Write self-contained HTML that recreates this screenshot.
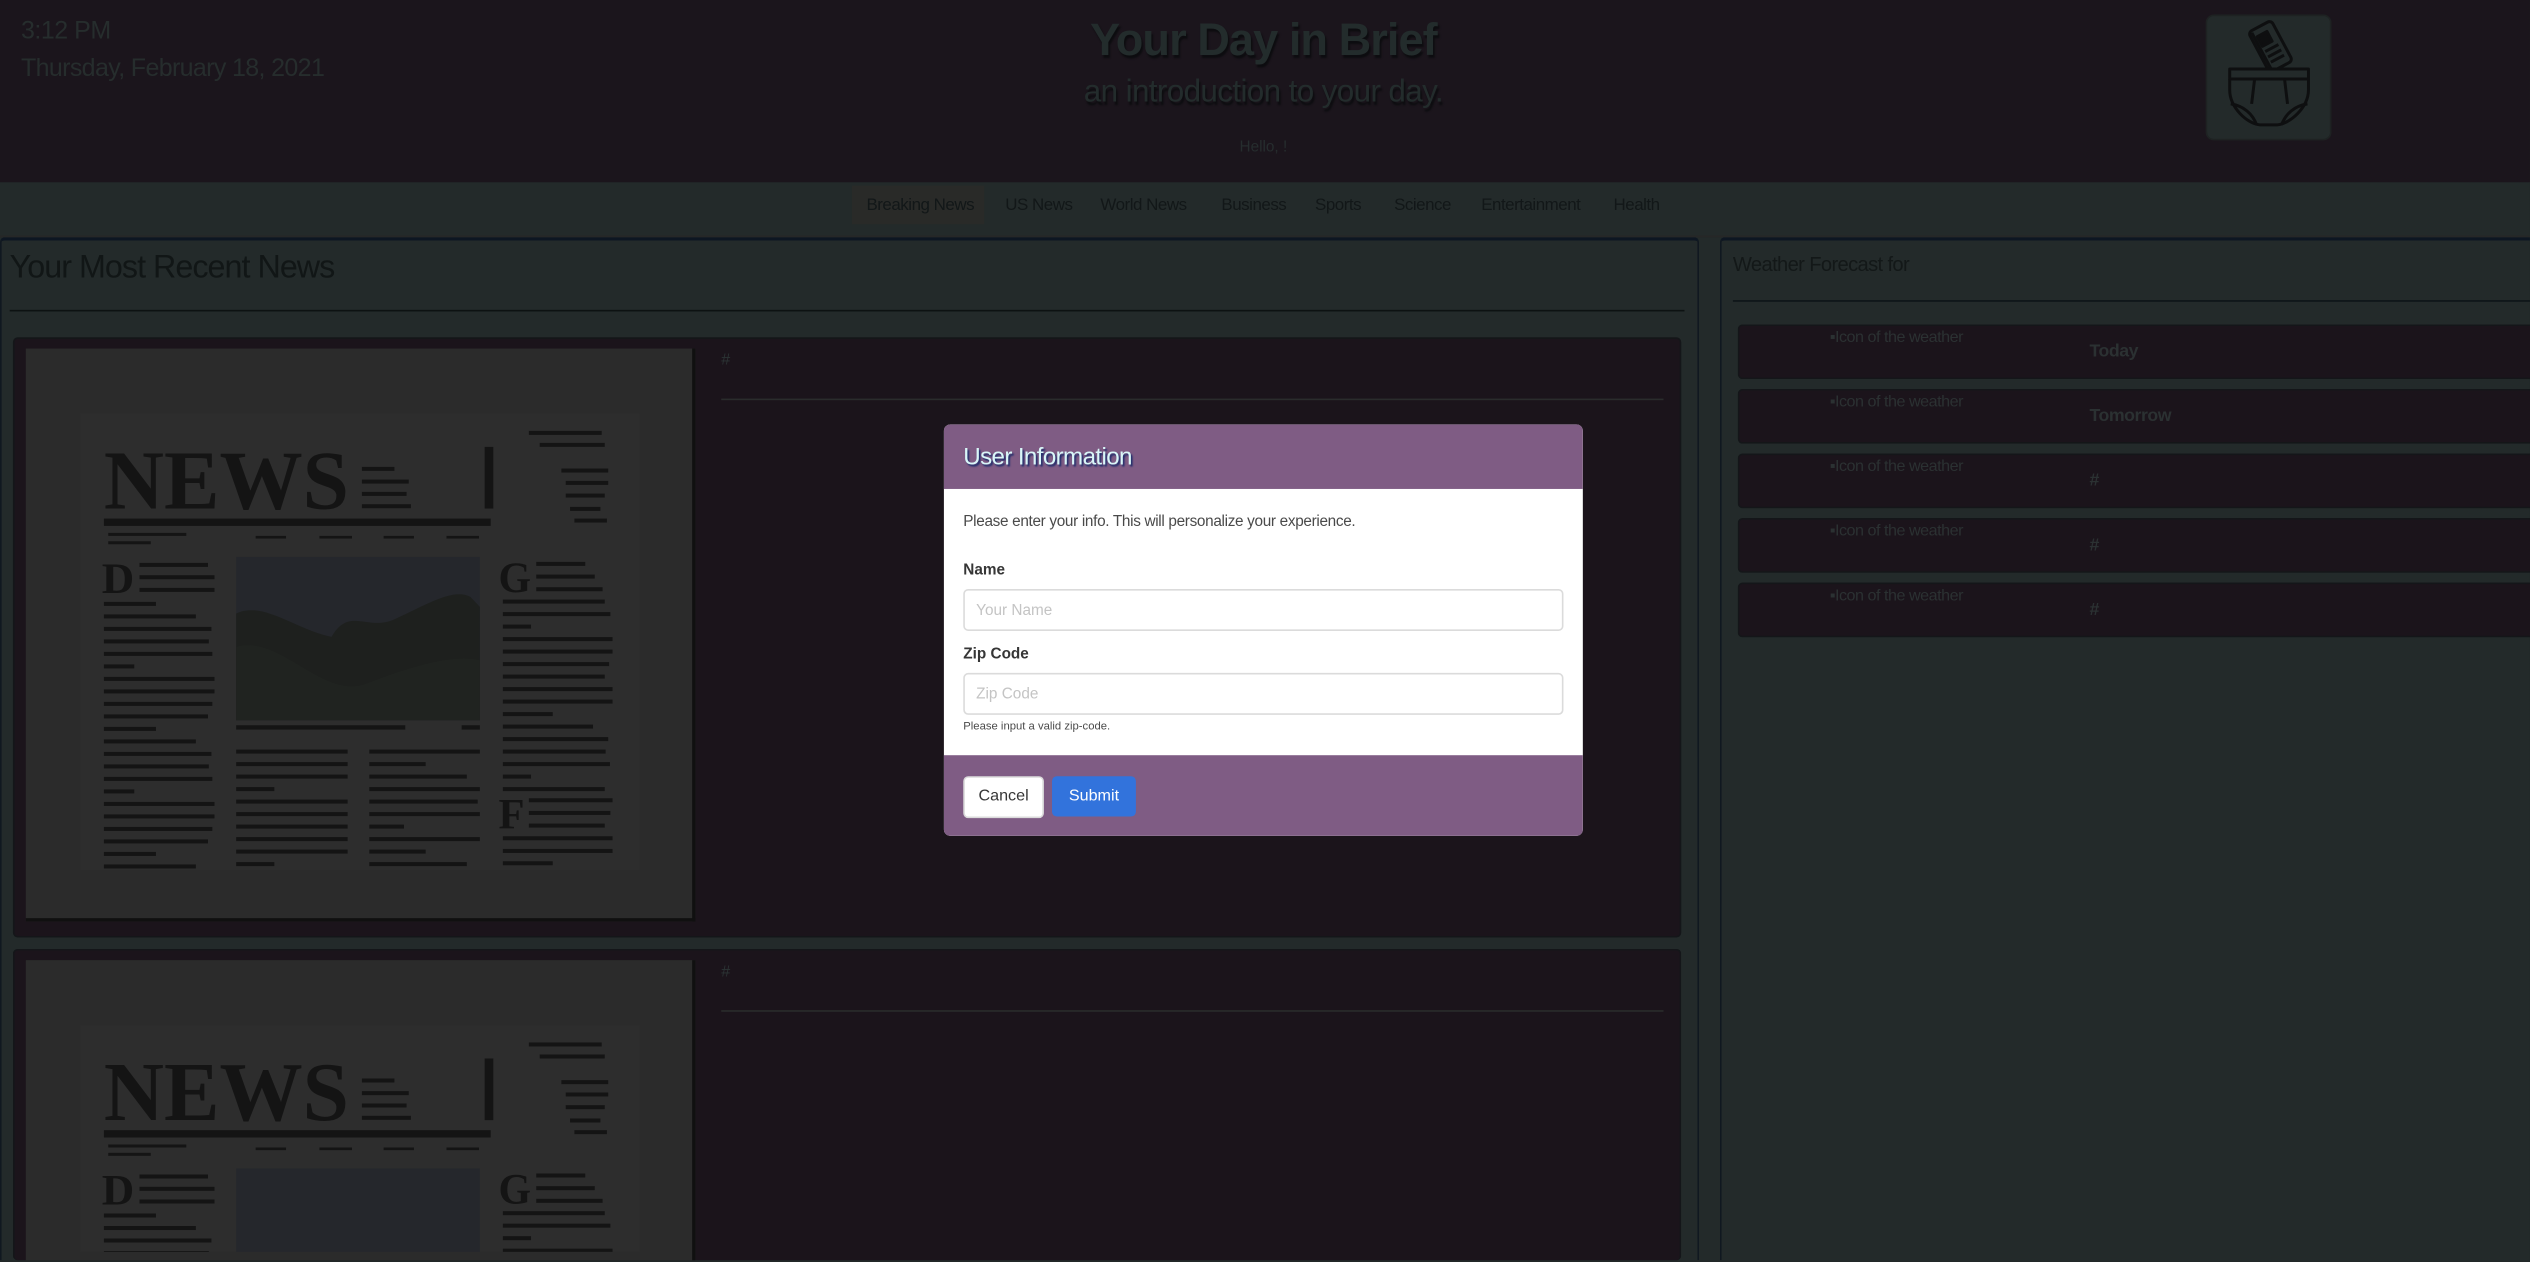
<!DOCTYPE html>
<html><head><meta charset="utf-8">
<style>
html,body{margin:0;padding:0;background:#1b151c;overflow:hidden;width:2530px;height:1262px}
#w{position:absolute;left:0;top:0;width:1568px;height:782px;transform:scale(1.6135,1.6137);transform-origin:0 0;font-family:"Liberation Sans",sans-serif;overflow:hidden;background:#232a2a}
.a{position:absolute;white-space:nowrap}
#hdr{position:absolute;left:0;top:0;width:1568px;height:113px;background:#1b151c}
#nav{position:absolute;left:0;top:113px;width:1568px;height:33px;background:#232a2a;border-bottom:1px solid #262727}
.ni{position:absolute;top:121px;font-size:10.5px;color:#121718;letter-spacing:-.3px}
.card{position:absolute;background:#1b141b;border:1px solid #141619;border-radius:3px}
.img{position:absolute;background:#2b2b2b;overflow:hidden;border-right:2px solid #101010;border-bottom:2px solid #101010}
.wr{position:absolute;left:1077px;width:491px;height:32px;background:#1b141b;border:1px solid #141619;border-right:none;border-radius:3px 0 0 3px}
.wi{position:absolute;left:56px;top:2px;font-size:10px;color:#2b3132;letter-spacing:-.3px}
.wl{position:absolute;left:217px;top:10px;font-size:11px;font-weight:bold;color:#2b3132;letter-spacing:-.3px}
</style></head><body><div id="w">
<div id="hdr"></div>
<div class="a" style="left:13px;top:11px;font-size:15.5px;color:#262d2d;letter-spacing:-.3px">3:12 PM</div>
<div class="a" style="left:13px;top:34px;font-size:15.5px;color:#262d2d;letter-spacing:-.4px">Thursday, February 18, 2021</div>
<div class="a" style="left:0;width:1566px;text-align:center;top:9px;font-size:28px;font-weight:bold;color:#232c2c;letter-spacing:-.6px;text-shadow:1px 2px 1px #0d0d10">Your Day in Brief</div>
<div class="a" style="left:0;width:1566px;text-align:center;top:46px;font-size:19.5px;color:#232c2c;letter-spacing:-.4px;text-shadow:1px 2px 1px #0d0d10">an introduction to your day.</div>
<div class="a" style="left:0;width:1566px;text-align:center;top:86px;font-size:9.5px;color:#262d2e">Hello, !</div>
<div class="a" style="left:1367px;top:9px;width:76px;height:76px;background:#232a2a;border-radius:5px;border:1px solid #1e2222">
<svg width="76" height="76" viewBox="0 0 122 123" fill="none" stroke="#0e0f10" stroke-width="3" stroke-linejoin="round">
<g transform="rotate(-28 62 31)"><rect x="50" y="8" width="26" height="46" rx="4"/><rect x="56" y="16" width="11" height="11" fill="#0e0f10"/><line x1="56" y1="33" x2="71" y2="33"/><line x1="56" y1="39" x2="71" y2="39"/><line x1="56" y1="45" x2="71" y2="45"/><line x1="53" y1="10" x2="53" y2="52"/></g>
<rect x="22" y="53" width="79" height="10" fill="#232a2a"/>
<path d="M22 63 L22 74 C22 92 40 108 52 109 L70 109 C82 108 101 92 101 74 L101 63"/>
<path d="M47 63 L44 88 M77 63 L80 88"/>
<path d="M23 88 C36 90 45 98 49 109 M100 88 C87 90 78 98 74 109"/>
</svg></div>
<div id="nav"></div>
<div class="a" style="left:528px;top:115px;width:82px;height:24px;background:#292a28"></div>
<div class="ni" style="left:537px">Breaking News</div>
<div class="ni" style="left:623px">US News</div>
<div class="ni" style="left:682px">World News</div>
<div class="ni" style="left:757px">Business</div>
<div class="ni" style="left:815px">Sports</div>
<div class="ni" style="left:864px">Science</div>
<div class="ni" style="left:918px">Entertainment</div>
<div class="ni" style="left:1000px">Health</div>

<div class="a" style="left:0;top:147px;width:1051px;height:632px;border:1px solid #101820;border-top:2px solid #0d1622;border-bottom:none;border-radius:3px 3px 0 0"></div>
<div class="a" style="left:6px;top:155px;font-size:20px;color:#111616;letter-spacing:-.6px">Your Most Recent News</div>
<div class="a" style="left:6px;top:192px;width:1038px;height:1px;background:#0d1212"></div>

<div class="card" style="left:8px;top:209px;width:1032px;height:370px"></div>
<div class="a" style="left:447px;top:218px;font-size:10px;color:#2b3334">#</div>
<div class="a" style="left:447px;top:247px;width:584px;height:1px;background:#2a2c2c"></div>
<div class="card" style="left:8px;top:588px;width:1032px;height:192px;border-bottom:none"></div>
<div class="a" style="left:447px;top:597px;font-size:10px;color:#2b3334">#</div>
<div class="a" style="left:447px;top:626px;width:584px;height:1px;background:#2a2c2c"></div>

<div class="img" id="i1" style="left:16px;top:216px;width:413px;height:353px"><svg id="np" style="position:absolute;left:-3.6px;top:32px" width="421.4" height="322.3" viewBox="0 0 1568 1560" preserveAspectRatio="none">
<rect x="140" y="40" width="1290" height="1370" fill="#2d2d2d"/>
<g fill="#141414">
<text x="195" y="325" font-family="Liberation Serif,serif" font-weight="bold" font-size="250" textLength="565" lengthAdjust="spacingAndGlyphs">NEWS</text>
<rect x="790" y="200" width="75" height="12"/><rect x="790" y="238" width="108" height="12"/><rect x="790" y="275" width="103" height="12"/><rect x="790" y="312" width="113" height="12"/>
<rect x="1073" y="140" width="20" height="185"/>
<rect x="195" y="355" width="892" height="22"/>
<rect x="205" y="398" width="180" height="9"/><rect x="205" y="423" width="98" height="9"/>
<rect x="545" y="407" width="70" height="8"/><rect x="692" y="407" width="75" height="8"/><rect x="840" y="407" width="70" height="8"/><rect x="985" y="407" width="75" height="8"/>
<rect x="1175" y="92" width="168" height="12"/><rect x="1200" y="128" width="150" height="12"/><rect x="1250" y="205" width="108" height="12"/><rect x="1260" y="242" width="98" height="12"/><rect x="1260" y="280" width="90" height="12"/><rect x="1270" y="320" width="70" height="12"/><rect x="1280" y="355" width="75" height="12"/>
<text x="190" y="578" font-family="Liberation Serif,serif" font-weight="bold" font-size="130" textLength="75" lengthAdjust="spacingAndGlyphs">D</text>
<text x="1105" y="575" font-family="Liberation Serif,serif" font-weight="bold" font-size="130" textLength="75" lengthAdjust="spacingAndGlyphs">G</text>
<text x="1105" y="1285" font-family="Liberation Serif,serif" font-weight="bold" font-size="130" textLength="60" lengthAdjust="spacingAndGlyphs">F</text>
<rect x="277" y="488" width="158" height="12"/><rect x="277" y="525" width="173" height="12"/><rect x="277" y="563" width="173" height="12"/>
<rect x="1192" y="485" width="113" height="12"/><rect x="1192" y="523" width="135" height="12"/><rect x="1192" y="561" width="153" height="12"/>
<rect x="1175" y="1194" width="193" height="12"/><rect x="1175" y="1232" width="188" height="12"/><rect x="1175" y="1270" width="175" height="12"/>
<rect x="500" y="975" width="390" height="13"/><rect x="1020" y="975" width="42" height="13"/>
</g>
<rect x="500" y="470" width="562" height="490" fill="#25272c"/>
<path d="M500 640 C560 600 640 690 720 710 C760 620 800 690 860 660 C930 620 1000 560 1040 590 L1062 620 L1062 960 L500 960Z" fill="#1e201e"/>
<path d="M500 740 C600 700 700 900 800 850 C900 800 1000 760 1062 780 L1062 960 L500 960Z" fill="#202320"/>
<g fill="#141414" id="lines"></g>
</svg></div>
<div class="img" id="i2" style="left:16px;top:595px;width:413px;height:186px;border-bottom:none"></div>

<div class="a" style="left:1066px;top:147px;width:501px;height:632px;border:1px solid #101820;border-top:2px solid #0d1622;border-right:none;border-bottom:none;border-radius:3px 0 0 0"></div>
<div class="a" style="left:1074px;top:157px;font-size:12.5px;color:#131818;letter-spacing:-.4px">Weather Forecast for</div>
<div class="a" style="left:1074px;top:186px;width:494px;height:1px;background:#0d1418"></div>
<div class="wr" style="top:201px"><div class="wi">▪Icon of the weather</div><div class="wl">Today</div></div>
<div class="wr" style="top:241px"><div class="wi">▪Icon of the weather</div><div class="wl">Tomorrow</div></div>
<div class="wr" style="top:281px"><div class="wi">▪Icon of the weather</div><div class="wl">#</div></div>
<div class="wr" style="top:321px"><div class="wi">▪Icon of the weather</div><div class="wl">#</div></div>
<div class="wr" style="top:361px"><div class="wi">▪Icon of the weather</div><div class="wl">#</div></div>

<div class="a" style="left:585px;top:263px;width:396px;height:255px;border-radius:4px;overflow:hidden;background:#fff">
<div style="position:absolute;left:0;top:0;width:396px;height:40px;background:#7f5c84"></div>
<div class="a" style="left:12px;top:12px;font-size:15px;color:#d9f6f8;letter-spacing:-.4px;text-shadow:1px 1px 1px #1a2a6a">User Information</div>
<div class="a" style="left:12px;top:55px;font-size:9.5px;color:#4a4a4a;letter-spacing:-.2px">Please enter your info. This will personalize your experience.</div>
<div class="a" style="left:12px;top:85px;font-size:9.5px;font-weight:bold;color:#363636">Name</div>
<div class="a" style="left:12px;top:102px;width:370px;height:24px;border:1px solid #dbdbdb;border-radius:3px"></div>
<div class="a" style="left:20px;top:110px;font-size:9.5px;color:#c4c4c4">Your Name</div>
<div class="a" style="left:12px;top:137px;font-size:9.5px;font-weight:bold;color:#363636">Zip Code</div>
<div class="a" style="left:12px;top:154px;width:370px;height:24px;border:1px solid #dbdbdb;border-radius:3px"></div>
<div class="a" style="left:20px;top:162px;font-size:9.5px;color:#c4c4c4">Zip Code</div>
<div class="a" style="left:12px;top:184px;font-size:7px;color:#4a4a4a">Please input a valid zip-code.</div>
<div style="position:absolute;left:0;top:205px;width:396px;height:50px;background:#7f5c84"></div>
<div class="a" style="left:12px;top:218px;width:48px;height:24px;background:#fff;border:1px solid #dbdbdb;border-radius:3px;font-size:10px;color:#363636;text-align:center;line-height:24px">Cancel</div>
<div class="a" style="left:67px;top:218px;width:52px;height:25px;background:#3273dc;border-radius:3px;font-size:10px;color:#fff;text-align:center;line-height:25px">Submit</div>
</div>
</div>
<script>
var g=document.getElementById('lines'),s='';
function col(x,w,ys){ys.forEach(function(y,i){s+='<rect x="'+x+'" y="'+y+'" width="'+w[i%w.length]+'" height="12"/>';});}
var L=[],M=[],R=[];for(var y=605;y<1400;y+=37.5)L.push(y);for(var y=1048;y<1400;y+=37.5)M.push(y);for(var y=598;y<1170;y+=37.5)R.push(y);
col(195,[120,212,248,242,250,70,255,255,250,240],L);
col(500,[257,257,257,88,257,257],M);col(807,[255,130,225,255,250,255,80],M);
col(1115,[235,248,65,253,253,245,235,253,253,115,208,243,237,247,65],R);
col(1115,[253,253,115],[1308,1346,1383]);
g.innerHTML=s;
var c=document.getElementById('np').cloneNode(true);c.removeAttribute('id');c.querySelector('#lines').removeAttribute('id');
c.setAttribute('height','150');c.setAttribute('viewBox','0 0 1568 726');
var H=720;
Array.prototype.slice.call(c.querySelectorAll('rect,text,path')).forEach(function(e){
 if(e.tagName=='path'){e.parentNode.removeChild(e);return;}
 var y=parseFloat(e.getAttribute('y'));
 if(e.tagName=='text'){if(y>H)e.parentNode.removeChild(e);return;}
 var h=parseFloat(e.getAttribute('height'));
 if(y>=H)e.parentNode.removeChild(e);else if(y+h>H)e.setAttribute('height',H-y);
});
document.getElementById('i2').appendChild(c);
</script>
</body></html>
